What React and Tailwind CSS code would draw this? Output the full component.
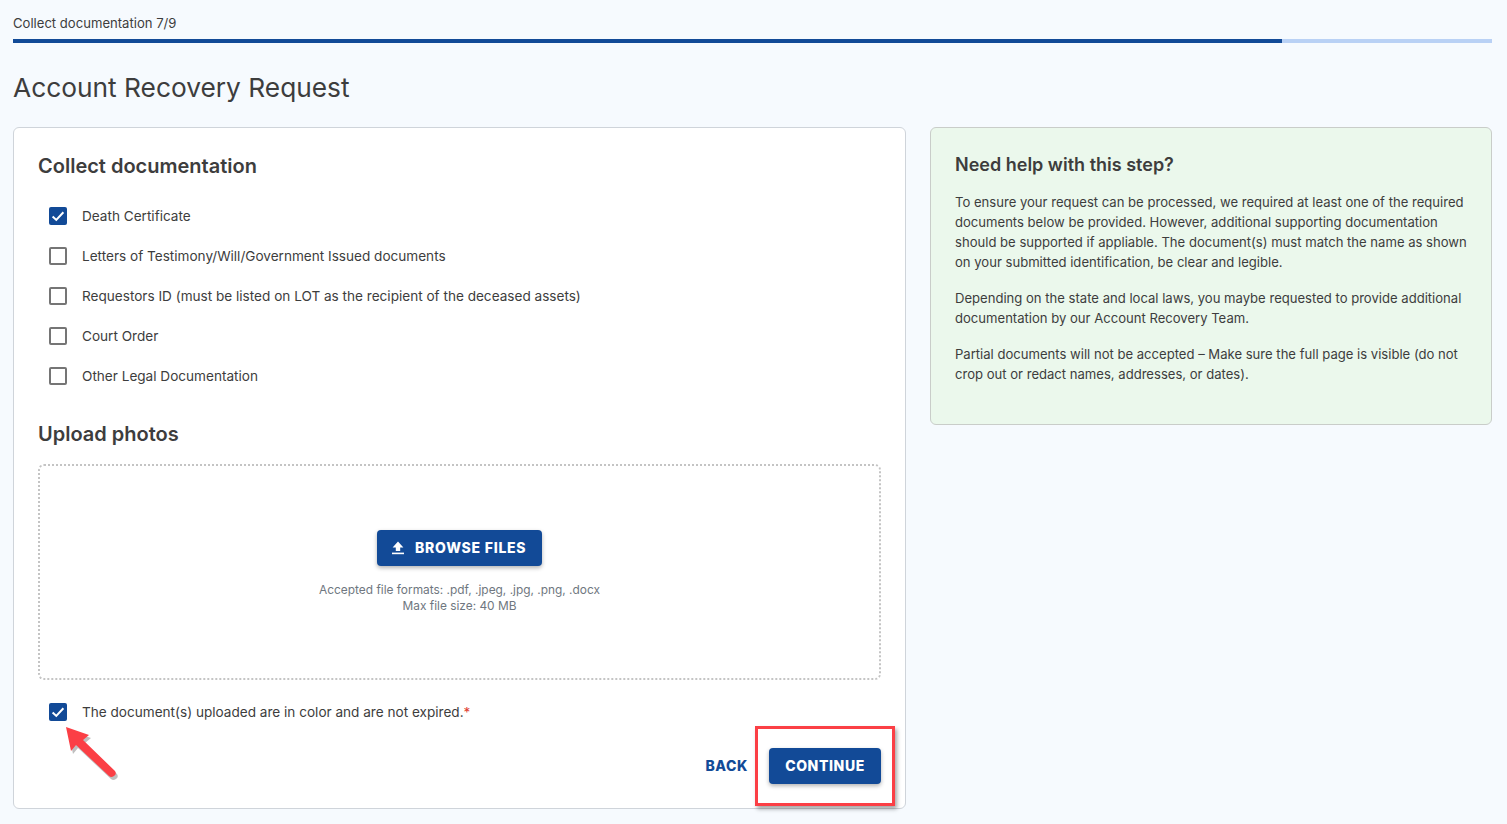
import React from 'react';

const DOCS = [
  { label: 'Death Certificate', checked: true },
  { label: 'Letters of Testimony/Will/Government Issued documents' },
  { label: 'Requestors ID (must be listed on LOT as the recipient of the deceased assets)' },
  { label: 'Court Order' },
  { label: 'Other Legal Documentation' },
];

function Checkbox({ checked }) {
  if (checked) {
    return (
      <span className="w-[18px] h-[18px] rounded-[2px] bg-[#124a97] flex items-center justify-center shrink-0">
        <svg width="14" height="14" viewBox="0 0 14 14" fill="none">
          <path d="M1.6 7.4 L5.3 10.9 L12.4 3.3" stroke="#fff" strokeWidth="2" />
        </svg>
      </span>
    );
  }
  return <span className="w-[18px] h-[18px] rounded-[2px] border-2 border-[#757575] bg-white shrink-0" />;
}

function CheckRow({ checked, children }) {
  return (
    <div className="flex items-center h-10 pl-[11px] gap-[15px] text-[13.58px] text-[#3d3d3d]">
      <Checkbox checked={checked} />
      <span>{children}</span>
    </div>
  );
}

export default function App() {
  return (
    <div className="relative h-[824px] overflow-hidden bg-[#f6fafe] pl-[13px] pr-[15px] pt-[14px] font-['Inter',sans-serif] text-[#3d3d3d]">
      <div className="text-[13.1px] leading-[18px] h-[25px]">Collect documentation 7/9</div>
      <div className="flex h-1 bg-[#b9d1f5]">
        <div className="w-[1269px] bg-[#124a97]" />
      </div>
      <h1 className="mt-[25px] text-[26.3px] leading-[40px] font-normal">Account Recovery Request</h1>

      <div className="mt-[19px] flex items-start gap-6">
        <div className="w-[893px] h-[682px] shrink-0 rounded-md border border-[#cfd4da] bg-white px-6 pt-[24px]">
          <h2 className="text-xl leading-[28px] font-semibold">Collect documentation</h2>
          <div className="mt-[16px]">
            {DOCS.map((d) => (
              <CheckRow key={d.label} checked={d.checked}>{d.label}</CheckRow>
            ))}
          </div>
          <h2 className="mt-[24px] text-xl leading-[28px] font-semibold">Upload photos</h2>
          <div className="mt-[16px] h-[216px] rounded-md border-2 border-dotted border-[#c4c4c4] flex flex-col items-center pt-[64px]">
            <button className="h-9 w-[165px] rounded bg-[#124a97] text-white text-sm font-extrabold tracking-[0.75px] flex items-center pl-[13px] gap-[9px] shadow-[0_2px_4px_rgba(0,0,0,0.3)]">
              <svg width="16" height="16" viewBox="0 0 16 16" fill="#fff">
                <path d="M8 1.6 L13.4 7.6 H10.2 V11 H5.8 V7.6 H2.6 Z" />
                <rect x="2" y="12.6" width="12" height="1.6" />
              </svg>
              BROWSE FILES
            </button>
            <div className="mt-4 text-[11.9px] leading-4 text-[#6f7780] text-center">
              <div>Accepted file formats: .pdf, .jpeg, .jpg, .png, .docx</div>
              <div>Max file size: 40 MB</div>
            </div>
          </div>
          <div className="mt-[12px]">
            <CheckRow checked>
              The document(s) uploaded are in color and are not expired.<span className="text-[#e0402f]">*</span>
            </CheckRow>
          </div>
          <div className="mt-[16px] flex items-center justify-end gap-[21px]">
            <button className="text-sm font-extrabold tracking-[0.6px] text-[#124a97]">BACK</button>
            <button className="h-9 w-28 rounded bg-[#124a97] text-white text-sm font-extrabold tracking-[0.6px] shadow-[0_2px_4px_rgba(0,0,0,0.3)]">CONTINUE</button>
          </div>
        </div>

        <div className="flex-1 h-[298px] rounded-md border border-[#c9cdc9] bg-[#ebf8ec] pl-6 pr-5 pt-[22px]">
          <h2 className="text-lg leading-[29px] font-semibold">Need help with this step?</h2>
          <p className="mt-[13px] text-[13.08px] leading-5">
            To ensure your request can be processed, we required at least one of the required documents below be provided. However, additional supporting documentation should be supported if appliable. The document(s) must match the name as shown on your submitted identification, be clear and legible.
          </p>
          <p className="mt-4 text-[13.08px] leading-5">
            Depending on the state and local laws, you maybe requested to provide additional documentation by our Account Recovery Team.
          </p>
          <p className="mt-4 text-[13.08px] leading-5">
            Partial documents will not be accepted – Make sure the full page is visible (do not crop out or redact names, addresses, or dates).
          </p>
        </div>
      </div>

      {/* red annotations on top of the page */}
      <div className="absolute left-[755px] top-[726px] w-[140px] h-[80px] border-[3px] border-[#fb3f45] shadow-[2px_3px_4px_rgba(0,0,0,0.35)]" />
      <svg className="absolute left-[60px] top-[722px]" width="64" height="64" viewBox="0 0 64 64" fill="none">
        <path d="M6 5 L29 13 L23 18 L55 49 Q57 52 54 54 Q51 56 49 54 L16 23 L11 29 Z" fill="#000" opacity="0.25" transform="translate(2 3)" />
        <path d="M6 5 L29 13 L23 18 L55 49 Q57 52 54 54 Q51 56 49 54 L16 23 L11 29 Z" fill="#fb3f45" />
      </svg>
    </div>
  );
}
